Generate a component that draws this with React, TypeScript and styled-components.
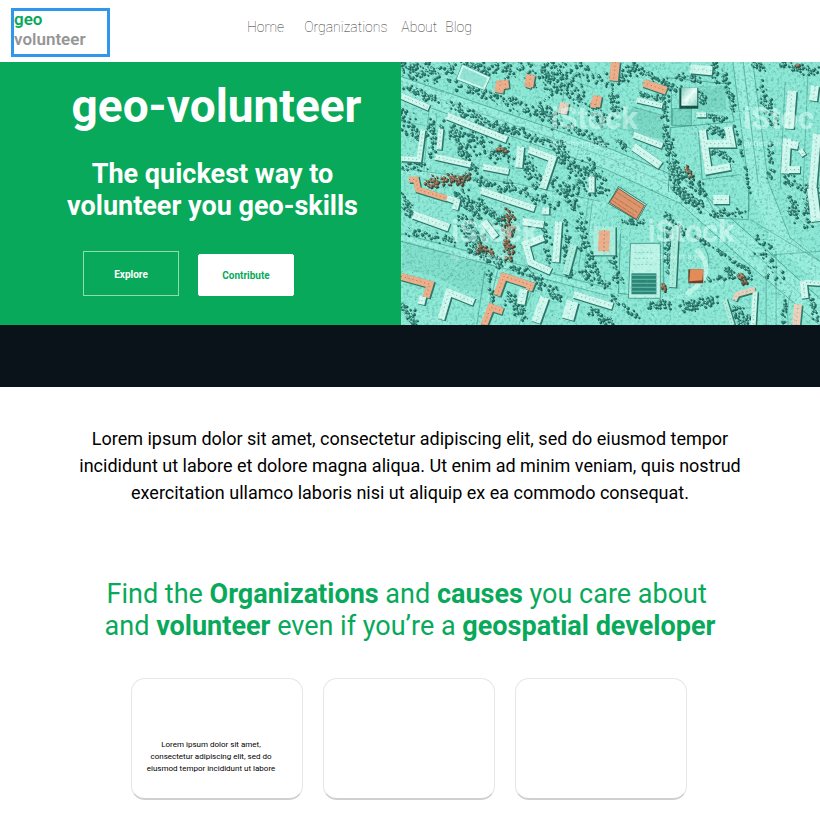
import React from "react";
import styled, { createGlobalStyle } from "styled-components";

const green = "#08a95a";

const GlobalStyle = createGlobalStyle`
  * { box-sizing: border-box; }
  body {
    margin: 0;
    background: #fff;
    color: #000;
    font-family: Roboto, "Liberation Sans", sans-serif;
  }
`;

const Header = styled.header`
  display: flex;
  align-items: flex-start;
  height: 62px;
  padding: 8px 11px 0;
`;

const Logo = styled.a`
  width: 99px;
  height: 49px;
  border: 3px solid #2f98ec;
  color: #969696;
  font-size: 17px;
  font-weight: 600;
  line-height: 20px;
  text-decoration: none;
`;

const LogoAccent = styled.span`
  display: block;
  height: 18px;
  line-height: 16px;
  color: ${green};
`;

const Nav = styled.nav`
  display: flex;
  margin: 10px 0 0 137px;
`;

const NavLink = styled.a<{ $gap: number }>`
  margin-right: ${(p) => p.$gap}px;
  color: #333;
  font-size: 14px;
  font-weight: 100;
  line-height: 18px;
  text-decoration: none;
`;

const Hero = styled.section`
  display: grid;
  grid-template-columns: 401fr 419fr;
`;

const HeroPanel = styled.div`
  display: flex;
  flex-direction: column;
  align-items: center;
  padding: 16px 0 29px 24px;
  background: ${green};
  color: #fff;
  text-align: center;
`;

const Title = styled.h1`
  margin: 0 0 24px 8px;
  font-size: 46px;
  font-weight: 700;
  line-height: 56px;
`;

const Tagline = styled.h2`
  margin: 0;
  font-size: 27px;
  font-weight: 700;
  line-height: 32px;
`;

const Actions = styled.div`
  display: flex;
  align-items: flex-end;
  gap: 19px;
  margin: 29px 48px 0 0;
`;

const Button = styled.button<{ $solid?: boolean }>`
  width: 96px;
  height: ${(p) => (p.$solid ? 42 : 45)}px;
  padding: ${(p) => (p.$solid ? 0 : 2)}px 0 0;
  border: 1px solid ${(p) => (p.$solid ? "#fff" : "#8fdcb0")};
  border-radius: ${(p) => (p.$solid ? 2 : 0)}px;
  background: ${(p) => (p.$solid ? "#fff" : "transparent")};
  color: ${(p) => (p.$solid ? green : "#fff")};
  font-family: inherit;
  font-size: 10px;
  font-weight: 700;
  cursor: pointer;
`;

const MapFrame = styled.div`
  position: relative;
  overflow: hidden;
  background: #80dfca;
`;

const MapSvg = styled.svg`
  position: absolute;
  inset: 0;
  width: 100%;
  height: 100%;
`;

const Band = styled.div`
  height: 62px;
  background: #0a131a;
`;

const Intro = styled.p`
  max-width: 690px;
  margin: 38px auto 0;
  font-size: 18px;
  line-height: 27px;
  text-align: center;
`;

const Heading = styled.h2`
  margin: 72px 0 0;
  color: ${green};
  font-size: 27px;
  font-weight: 400;
  line-height: 32px;
  text-align: center;
`;

const Cards = styled.section`
  display: flex;
  justify-content: center;
  gap: 20px;
  margin: 36px 3px 20px 0;
`;

const Card = styled.article`
  display: flex;
  flex-direction: column;
  justify-content: flex-end;
  width: 172px;
  height: 122px;
  padding: 0 11px 23px 0;
  border: 1px solid #e6e6e6;
  border-bottom: 2px solid #d0d0d0;
  border-radius: 14px;
  font-size: 8px;
  line-height: 12px;
  text-align: center;
`;

const CardText = styled.p`
  margin: 0;
`;

/* ---------- aerial map ---------- */

type Tone = "white" | "pale" | "orange" | "pink";
const tones: Record<Tone, string> = {
  white: "#d2f8ef",
  pale: "#aeeede",
  orange: "#f0ae8a",
  pink: "#f0cfbb",
};

// Each building is a polyline footprint: points, thickness, tone.
const buildings: [string, number, Tone][] = [
  ["0,34 28,46", 6, "white"],
  ["46,54 106,78", 7, "white"],
  ["40,67 38,88", 5, "white"],
  ["22,68 18,98 0,97", 5, "white"],
  ["34,95 70,103", 6, "white"],
  ["82,105 108,110", 6, "white"],
  ["120,85 118,106", 7, "white"],
  ["128,88 152,97 142,127", 7, "white"],
  ["80,129 134,147", 7, "white"],
  ["45,136 56,140 54,148", 6, "white"],
  ["191,115 191,131", 6, "white"],
  ["12,153 48,166", 8, "white"],
  ["83,160 95,176", 7, "white"],
  ["122,160 143,163", 7, "white"],
  ["158,160 155,201", 7, "white"],
  ["143,176 125,183 130,201 150,210", 7, "white"],
  ["145,146 145,153", 7, "white"],
  ["173,183 165,213", 7, "pale"],
  ["22,235 20,243", 7, "white"],
  ["123,228 120,243", 8, "white"],
  ["40,258 48,231 73,241", 7, "white"],
  ["144,236 135,261", 9, "white"],
  ["173,233 212,245", 7, "white"],
  ["172,240 167,258", 12, "white"],
  ["233,85 260,104", 8, "white"],
  ["290,7 312,9", 9, "white"],
  ["236,38 262,44", 5, "white"],
  ["233,73 262,84", 6, "white"],
  ["296,53 306,53", 5, "white"],
  ["306,82 331,82 328,65", 8, "white"],
  ["302,68 308,109 330,105", 7, "white"],
  ["392,29 389,67", 9, "white"],
  ["387,77 385,112", 8, "white"],
  ["387,82 398,84", 8, "white"],
  ["386,108 400,108", 7, "white"],
  ["400,88 404,94", 5, "white"],
  ["415,24 413,39", 8, "white"],
  ["417,72 412,132", 8, "white"],
  ["412,127 416,160", 10, "white"],
  ["313,138 329,138", 9, "white"],
  ["275,166 272,226", 7, "pale"],
  ["355,230 353,264", 5, "white"],
  ["403,219 405,237", 7, "white"],
  ["406,221 420,222", 5, "white"],
  ["324,238 332,264", 5, "pale"],
  ["204,165 204,194", 22, "pale"],
  ["8,118 15,118 17,128 46,137", 6, "orange"],
  ["0,215 29,223 25,236", 7, "orange"],
  ["96,234 103,215 130,224 128,229", 7, "orange"],
  ["83,264 90,246 102,250", 7, "orange"],
  ["243,21 266,29", 8, "orange"],
  ["215,0 213,19", 9, "orange"],
  ["100,19 98,31", 9, "orange"],
  ["104,18 105,27", 7, "orange"],
  ["130,13 128,25", 9, "orange"],
  ["125,22 131,24", 6, "orange"],
  ["164,41 162,52", 9, "pink"],
  ["197,34 195,45", 9, "orange"],
  ["190,42 196,43", 7, "orange"],
  ["334,239 337,233 355,228", 5, "pink"],
  ["398,243 396,264", 8, "pink"],
  ["204,169 203,190", 11, "orange"],
];

// Tree belts: start, end, spread, number of crowns.
const belts: number[][] = [
  [0, 4, 40, 14, 12, 70], [48, 2, 52, 18, 7, 18], [62, 1, 90, 12, 5, 24],
  [84, 4, 148, 10, 12, 60], [140, 14, 178, 30, 16, 72], [150, 4, 210, 20, 12, 52],
  [6, 26, 36, 38, 5, 34], [56, 23, 148, 53, 8, 85], [140, 42, 158, 64, 8, 26],
  [168, 34, 208, 62, 9, 35], [49, 43, 104, 68, 6, 66], [106, 67, 158, 85, 6, 44],
  [164, 64, 207, 82, 5, 34], [0, 50, 18, 76, 10, 35], [30, 58, 32, 96, 7, 30],
  [46, 64, 112, 98, 13, 80], [52, 68, 66, 98, 7, 40], [66, 104, 76, 106, 4, 12],
  [0, 106, 30, 104, 5, 20], [124, 100, 137, 122, 9, 42], [156, 87, 184, 117, 12, 75],
  [148, 120, 205, 129, 9, 45], [183, 102, 206, 120, 8, 25], [63, 112, 110, 130, 7, 40],
  [104, 122, 155, 145, 7, 38], [58, 132, 78, 151, 9, 48], [77, 140, 104, 164, 8, 42],
  [60, 157, 79, 186, 11, 65], [2, 136, 14, 158, 7, 30], [8, 170, 54, 180, 5, 35],
  [68, 186, 102, 203, 7, 44], [110, 205, 144, 219, 5, 30], [162, 127, 178, 149, 8, 40],
  [164, 157, 168, 214, 5, 40], [178, 159, 193, 213, 8, 50], [144, 166, 148, 208, 5, 28],
  [136, 220, 160, 236, 7, 30], [180, 213, 207, 225, 6, 28], [2, 242, 14, 262, 7, 40],
  [88, 208, 92, 248, 3, 16], [104, 232, 124, 256, 7, 42], [190, 249, 210, 262, 7, 25],
  [216, 19, 236, 2, 7, 38], [210, 28, 218, 52, 6, 25], [240, 10, 280, 28, 6, 42],
  [239, 32, 264, 38, 4, 24], [264, 25, 266, 86, 5, 45], [268, 79, 278, 130, 7, 58],
  [275, 14, 298, 19, 5, 20], [314, 0, 316, 22, 5, 22], [324, 9, 334, 49, 4, 30],
  [301, 33, 304, 41, 5, 25], [309, 55, 328, 58, 4, 22], [354, 1, 364, 6, 5, 20],
  [361, 24, 373, 64, 7, 42], [380, 2, 416, 10, 6, 42], [370, 80, 370, 118, 4, 24],
  [384, 118, 416, 130, 8, 36], [335, 64, 350, 130, 2, 30], [218, 79, 226, 87, 4, 15],
  [270, 105, 304, 131, 9, 55], [309, 66, 326, 73, 5, 25], [311, 89, 330, 96, 5, 24],
  [275, 129, 302, 145, 6, 58], [314, 151, 348, 152, 5, 24], [267, 166, 268, 215, 5, 40],
  [224, 160, 245, 163, 5, 16], [210, 190, 218, 222, 6, 26], [249, 245, 270, 242, 6, 30],
  [281, 247, 314, 240, 7, 50], [334, 247, 348, 264, 8, 46], [390, 132, 396, 158, 6, 30],
  [407, 135, 409, 168, 6, 32], [326, 211, 348, 219, 6, 28], [294, 174, 350, 211, 2, 38],
  [263, 151, 286, 172, 4, 20], [386, 238, 383, 262, 3, 16], [412, 235, 416, 260, 4, 22],
  [360, 175, 377, 224, 12, 30], [214, 235, 237, 257, 5, 22], [304, 220, 341, 215, 3, 18],
];
const autumnBelts: number[][] = [
  [27, 121, 68, 117, 7, 85], [108, 152, 108, 200, 7, 75], [95, 88, 104, 89, 3, 14],
  [76, 186, 92, 190, 5, 25], [340, 214, 346, 222, 4, 20], [262, 222, 264, 228, 3, 12],
  [286, 105, 291, 115, 4, 16], [396, 2, 399, 5, 3, 8],
];

const makeRandom = (seed: number) => () => {
  seed = (seed * 1664525 + 1013904223) % 4294967296;
  return seed / 4294967296;
};

function crowns(list: number[][], seed: number) {
  const rnd = makeRandom(seed);
  let dark = "";
  let mid = "";
  let light = "";
  const blob = (x: number, y: number, r: number) =>
    `M${(x - r).toFixed(1)} ${y.toFixed(1)}l${(r * 0.6).toFixed(1)} ${(-r).toFixed(1)} ${r.toFixed(1)} ${(r * 0.3).toFixed(1)} ${(r * 0.3).toFixed(1)} ${r.toFixed(1)} ${(-r).toFixed(1)} ${(r * 0.6).toFixed(1)}z`;
  for (const [x1, y1, x2, y2, spread, count] of list) {
    for (let i = 0; i < count * 1.3; i++) {
      const t = rnd();
      const x = x1 + (x2 - x1) * t + (rnd() + rnd() - 1) * spread;
      const y = y1 + (y2 - y1) * t + (rnd() + rnd() - 1) * spread;
      const r = 0.7 + rnd() * 1.4;
      dark += blob(x + 0.5, y + 0.5, r);
      mid += blob(x - 0.4, y - 0.4, r * 0.75);
      if (rnd() > 0.3) light += blob(x - 0.9, y - 0.9, r * 0.5);
    }
  }
  return { dark, mid, light };
}

function specks(seed: number, count: number) {
  const rnd = makeRandom(seed);
  let d = "";
  for (let i = 0; i < count; i++) {
    const x = rnd() * 420;
    const y = rnd() * 264;
    d += `M${x.toFixed(1)} ${y.toFixed(1)}l${(rnd() * 3 - 1).toFixed(1)} ${(rnd() * 2 - 1).toFixed(1)}`;
  }
  return d;
}

const evergreen = crowns(belts, 7);
const autumn = crowns(autumnBelts, 21);
const darkSpecks = specks(3, 1500);
const lightSpecks = specks(11, 1800);

const marks = [
  { x: 150, y: 67, label: "iStock" },
  { x: 343, y: 67, label: "iStoc" },
  { x: 50, y: 181, label: "iStock" },
  { x: 247, y: 181, label: "iStock" },
];

function AerialMap() {
  return (
    <MapSvg viewBox="0 0 420 264" preserveAspectRatio="xMidYMid slice" role="img" aria-label="Aerial map">
      <defs>
        <filter id="grain" x="0" y="0" width="100%" height="100%">
          <feTurbulence type="fractalNoise" baseFrequency="0.35" numOctaves="3" seed="4" />
          <feColorMatrix values="0 0 0 0 0.08  0 0 0 0 0.42  0 0 0 0 0.36  3.2 0 0 0 -1.55" />
        </filter>
        <linearGradient id="dome" x1="0" y1="0" x2="1" y2="1">
          <stop offset="0" stopColor="#7fcdbd" />
          <stop offset="0.5" stopColor="#eefffa" />
          <stop offset="1" stopColor="#8fd8c8" />
        </linearGradient>
      </defs>
      <rect width="420" height="264" fill="#8ee8d6" />
      <g fill="#7bd8c4">
        <path d="M4 178L82 196 98 204 86 232 60 228 30 214 0 208z" fill="#82dfcb" />
        <path d="M298 24H326V50H298z" />
        <path d="M272 47H291V64H272z" stroke="#2d8d7b" strokeWidth="0.6" />
        <path d="M232 45L263 54 263 78 212 66z" />
      </g>
      <g fill="none" stroke="#9aeedd">
        <path d="M-5 24L210 99 285 133 350 190 425 258" strokeWidth="21" />
        <path d="M342 -5L358 120 382 180 425 214" strokeWidth="19" />
        <path d="M376 170V264M32 48L26 110M0 110L110 124 205 144M0 176L210 232M82 264L98 205M196 140L186 190" strokeWidth="5" />
        <path d="M0 248L50 262M220 230L262 238 300 232 352 204" strokeWidth="4" />
      </g>
      <rect width="420" height="264" filter="url(#grain)" opacity="0.4" />
      <g fill="none" stroke="#297f6e" strokeWidth="0.7">
        <path d="M-5 13L212 88 290 121 356 179 425 242M-5 34L206 108 280 142 345 200 420 264" opacity="0.8" />
        <path d="M-5 22L210 97 286 131 352 190 420 250M30 27L48 32" opacity="0.45" />
        <path d="M332 -5L348 120 349 150M352 -5L368 120 390 176 425 204M343 0L358 122" opacity="0.7" />
        <path d="M376 190V264M366 204V264M0 172L212 228M0 180L206 234M84 210L76 264M98 205L84 262M134 222L118 264" opacity="0.7" />
        <path d="M0 107L110 121 200 140M28 48L23 110M36 52L31 92M188 137L178 206M192 139L184 204" opacity="0.55" />
        <path d="M268 16L326 22 334 60 270 66 268 130M298 69L302 118 340 113M271 22V64" opacity="0.8" />
        <path d="M302 128L318 157 348 158 349 128M220 172L218 232 258 237M263 166V228M300 180Q320 204 294 226L284 232" opacity="0.8" />
        <path d="M385 20L380 128M408 10L403 128M388 264Q386 240 392 230M350 158L420 200M350 195L420 190" opacity="0.6" />
        <path d="M232 45L263 54M230 72L264 88M210 75L240 93M154 12L192 26M160 55L166 8M0 60L20 63M110 92L106 122" opacity="0.6" />
      </g>
      <path d={darkSpecks} stroke="#22796a" strokeWidth="0.7" opacity="0.7" />
      <path d={lightSpecks} stroke="#c9f8ed" strokeWidth="0.8" opacity="0.8" />

      <path d={evergreen.dark} fill="#14534a" opacity="0.92" />
      <path d={evergreen.mid} fill="#358778" />
      <path d={evergreen.light} fill="#90e2d2" />
      <path d={autumn.dark} fill="#2b4036" />
      <path d={autumn.mid} fill="#7c6048" />
      <path d={autumn.light} fill="#b98f70" />

      <path d="M62 4L88 16 83 27 57 17z" fill="#94e4d4" stroke="#3d8f7e" strokeWidth="3" />
      <path d="M62 4L88 16 83 27 57 17z" fill="#94e4d4" stroke="#d3faf1" strokeWidth="2" />

      <g fill="none">
        {buildings.map(([points, width], i) => (
          <polyline key={i} points={points} stroke="#2b7567" strokeWidth={width + 1} transform="translate(1 1)" />
        ))}
        {buildings.map(([points, width, tone], i) => (
          <polyline key={i} points={points} stroke={tones[tone]} strokeWidth={width} />
        ))}
        {buildings.map(([points, , tone], i) => (
          <polyline
            key={i}
            points={points}
            stroke={tone === "orange" ? "#c26a43" : "#6fbfae"}
            strokeWidth="1"
            strokeDasharray="1 3"
          />
        ))}
      </g>

      <path d="M218 125L246 143 237 159 208 142z" fill="#a9ecdc" stroke="#1c6154" strokeWidth="0.8" />
      <path d="M218 127L244 144 236 158 209 141z" fill="#e2946a" stroke="#713e28" strokeWidth="0.8" />
      <path d="M217 131L240 146M214 136L237 151M212 139L234 154" stroke="#a5603e" strokeWidth="0.7" strokeDasharray="5 1" />
      <rect x="279" y="26" width="19" height="21" fill="#174f45" />
      <rect x="281" y="26" width="16" height="18" fill="url(#dome)" />
      <path d="M230 182H260V237H228z" fill="#bdf4e8" stroke="#3d8f7e" strokeWidth="0.8" />
      <path d="M234 191H254M234 197H254M233 203H252" stroke="#84cfbe" strokeDasharray="2 2" />
      <rect x="231" y="212" width="25" height="21" fill="#2c8475" />
      <path d="M231 214H256M231 218H256M231 222H256M231 226H256M231 230H256" stroke="#65bfae" />
      <path d="M296 188Q320 212 286 233" stroke="#c0f5e9" strokeWidth="5" fill="none" />
      <rect x="288" y="208" width="15" height="14" fill="#6d3d26" />
      <path d="M290 208H303L302 219 289 220z" fill="#ea8a56" />

      <rect width="420" height="264" filter="url(#grain)" opacity="0.2" />

      <g fill="#e6fff9" fontFamily="Roboto, sans-serif" opacity="0.5">
        {marks.map((m) => (
          <g key={`${m.x}-${m.y}`}>
            <text x={m.x} y={m.y} fontSize="31" fontWeight="700">{m.label}</text>
            <text x={m.x} y={m.y + 17} fontSize="8">by Getty Images</text>
          </g>
        ))}
      </g>
    </MapSvg>
  );
}

const links = [
  { label: "Home", gap: 20 },
  { label: "Organizations", gap: 14 },
  { label: "About", gap: 8 },
  { label: "Blog", gap: 0 },
];

export default function App() {
  return (
    <>
      <GlobalStyle />
      <Header>
        <Logo href="#">
          <LogoAccent>geo</LogoAccent>volunteer
        </Logo>
        <Nav>
          {links.map((l) => (
            <NavLink key={l.label} href="#" $gap={l.gap}>
              {l.label}
            </NavLink>
          ))}
        </Nav>
      </Header>
      <main>
        <Hero>
          <HeroPanel>
            <Title>geo-volunteer</Title>
            <Tagline>
              The quickest way to
              <br />
              volunteer you geo-skills
            </Tagline>
            <Actions>
              <Button>Explore</Button>
              <Button $solid>Contribute</Button>
            </Actions>
          </HeroPanel>
          <MapFrame>
            <AerialMap />
          </MapFrame>
        </Hero>
        <Band />
        <Intro>
          Lorem ipsum dolor sit amet, consectetur adipiscing elit, sed do eiusmod tempor incididunt ut
          labore et dolore magna aliqua. Ut enim ad minim veniam, quis nostrud exercitation ullamco
          laboris nisi ut aliquip ex ea commodo consequat.
        </Intro>
        <Heading>
          Find the <b>Organizations</b> and <b>causes</b> you care about&nbsp;
          <br />
          and <b>volunteer</b> even if you’re a <b>geospatial developer</b>
        </Heading>
        <Cards>
          <Card>
            <CardText>
              Lorem ipsum dolor sit amet,
              <br />
              consectetur adipiscing elit, sed do
              <br />
              eiusmod tempor incididunt ut labore
            </CardText>
          </Card>
          <Card />
          <Card />
        </Cards>
      </main>
    </>
  );
}
